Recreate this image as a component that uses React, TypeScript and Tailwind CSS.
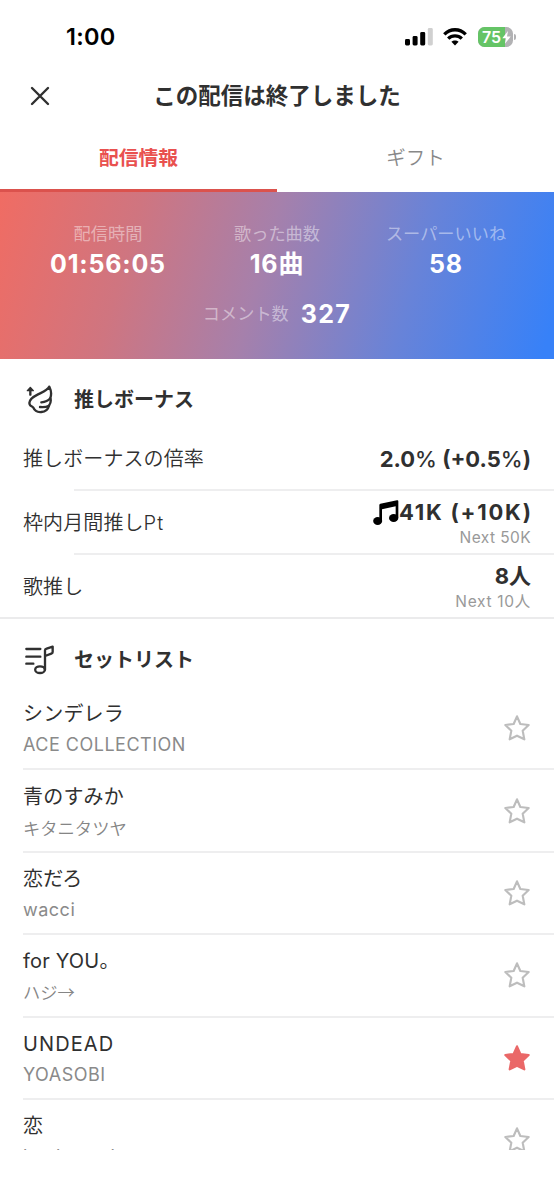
import React from 'react';

interface Song {
  title: string;
  artist: string;
  liked?: boolean;
  latin?: boolean;
}

const songs: Song[] = [
  { title: 'シンデレラ', artist: 'ACE COLLECTION', latin: true },
  { title: '青のすみか', artist: 'キタニタツヤ' },
  { title: '恋だろ', artist: 'wacci', latin: true },
  { title: 'for YOU。', artist: 'ハジ→' },
  { title: 'UNDEAD', artist: 'YOASOBI', liked: true, latin: true },
  { title: '恋', artist: 'back number', latin: true },
];

const StatusBar = () => (
  <div className="flex h-[74px] shrink-0 items-center justify-between pl-[66px] pr-[38px]">
    <span className="text-[23.5px] font-semibold tracking-[0.3px] text-black">1:00</span>
    <div className="flex items-center">
      <svg width="28" height="18" viewBox="0 0 28 18">
        <rect x="0" y="11" width="5" height="6.5" rx="1.4" />
        <rect x="7.6" y="8" width="5" height="9.5" rx="1.4" />
        <rect x="15.2" y="4" width="5" height="13.5" rx="1.4" />
        <rect x="22.8" y="0" width="5" height="17.5" rx="1.4" fill="#d0d0d0" />
      </svg>
      <svg className="ml-[10px]" width="24" height="18" viewBox="0 0 24 18" fill="none" stroke="#000" strokeWidth="3.3">
        <path d="M1.3 6.4C7.4 0.2 16.6 0.2 22.7 6.4" />
        <path d="M5.2 10.7C9 6.9 15 6.9 18.8 10.7" />
        <path d="M8.4 13.8C10.4 12 13.6 12 15.6 13.8L12 17.4Z" fill="#000" stroke="none" />
      </svg>
      <div className="relative ml-[11px] h-5 w-[35px] overflow-hidden rounded-[6.5px] bg-[#b2b2b4]">
        <div className="flex h-full w-[27px] items-center bg-[#65c466] pl-[4px] text-[16px] font-semibold text-white">75</div>
        <svg className="absolute left-[24px] top-[4px]" width="9" height="13" viewBox="0 0 9 13">
          <path d="M6 0L0.3 7.2H4L2.9 12.8L8.7 5.5H5Z" fill="#fff" />
        </svg>
      </div>
      <div className="ml-px h-[6px] w-[2px] rounded-r-full bg-[#b2b2b4]" />
    </div>
  </div>
);

const WingIcon = () => (
  <svg width="28" height="30" viewBox="78 44 84 90" fill="none" stroke="#303030" strokeWidth="7" strokeLinecap="round" strokeLinejoin="round">
    <path d="M94 73V60" />
    <path d="M94 51L85 61H103Z" fill="#303030" strokeWidth="4" />
    <path d="M151 49C144 61 131 65 117 72C101 80 88 91 92 102C94 108 100 107 103 112C107 122 116 126 127 125C139 124 147 118 150 106C155 99 157 92 154 83C158 72 156 59 151 49Z" />
    <path d="M154 84C147 92 138 95 127 96M150 106C143 110 133 111 123 110" />
  </svg>
);

const SetlistIcon = () => (
  <svg width="30" height="30" viewBox="76 45 90 90" fill="none" stroke="#303030" strokeWidth="7" strokeLinecap="round" strokeLinejoin="round">
    <path d="M80 57H122M80 80H122M80 101H101" />
    <ellipse cx="121" cy="119" rx="14.5" ry="10" />
    <path d="M136 119V61C136 58 138 57 141 56L159 50V66C159 69 158 70 155 71L136 78" />
  </svg>
);

const NoteIcon = () => (
  <svg width="26" height="26" viewBox="96 213 78 78">
    <path d="M115 228Q115 225 118 224L168 214Q172 213 172 217V266H164V232L123 241V276H115Z" />
    <ellipse cx="110" cy="276" rx="13.5" ry="12" />
    <ellipse cx="158" cy="267" rx="14" ry="12" />
  </svg>
);

const Star = ({ filled }: { filled?: boolean }) => (
  <svg
    width="28"
    height="28"
    viewBox="69 44 84 84"
    fill={filled ? '#ea6868' : 'none'}
    stroke={filled ? '#ea6868' : '#bdbdbd'}
    strokeWidth="6.5"
    strokeLinejoin="round"
  >
    <path d="M111 51L121 74L146 77L128 94L133 120L111 109L89 120L94 94L76 77L101 74Z" />
  </svg>
);

const Stat = ({ label, value }: { label: string; value: React.ReactNode }) => (
  <div className="flex w-[169px] flex-col items-center">
    <span className="text-[17.2px] leading-[26px] text-white/45 whitespace-nowrap">{label}</span>
    <span className="mt-px text-[25px] font-bold leading-[32px] tracking-[0.8px] text-white">{value}</span>
  </div>
);

const BonusRow = ({ label, value, next }: { label: React.ReactNode; value: React.ReactNode; next?: React.ReactNode }) => (
  <div className="flex h-16 items-center justify-between pl-[23px] pr-[23px]">
    <span className="text-[20px] font-[350] tracking-[0.1px]">{label}</span>
    <div className={`flex flex-col items-end ${next ? 'pt-[3px]' : ''}`}>
      <div className="flex h-[27px] items-center text-[22px] font-bold leading-[27px]">{value}</div>
      {next && <div className="text-[15.5px] leading-[24px] tracking-[0.4px] text-[#999]">{next}</div>}
    </div>
  </div>
);

const SongRow = ({ song }: { song: Song }) => (
  <div className="ml-[23px] flex h-[82.4px] shrink-0 items-center justify-between border-b-2 border-[#eeeeef] pr-[23px]">
    <div className="flex flex-col pt-[3px]">
      <span className={`text-[20px] leading-[30px] ${song.title === 'UNDEAD' ? 'tracking-[1.1px]' : 'tracking-[0.2px]'}`}>{song.title}</span>
      <span
        className={
          song.latin
            ? 'pt-px text-[18px] leading-[30px] tracking-[0.5px] text-[#8a8a8a]'
            : "font-['Noto_Sans_CJK_JP',sans-serif] text-[17.3px] font-[350] leading-[31px] text-[#858585]"
        }
      >
        {song.artist}
      </span>
    </div>
    <Star filled={song.liked} />
  </div>
);

const App: React.FC = () => {
  return (
    <div className="flex h-[1199px] w-[554px] flex-col overflow-hidden bg-white font-['Inter','Noto_Sans_CJK_JP',sans-serif] text-[#303030]">
      <StatusBar />

      <header className="grid h-[44px] shrink-0 grid-cols-[80px_1fr_80px] items-center">
        <svg className="ml-[30px]" width="20" height="20" viewBox="0 0 20 20" stroke="#303030" strokeWidth="2.4" strokeLinecap="round">
          <path d="M2 2L18 18M18 2L2 18" />
        </svg>
        <h1 className="text-center text-[22.5px] font-bold whitespace-nowrap">この配信は終了しました</h1>
      </header>

      <div className="grid h-[74px] shrink-0 grid-cols-2">
        <div className="flex items-center justify-center border-b-[3px] border-[#db524d] pt-[10px] text-[19.8px] font-bold text-[#e9514f]">配信情報</div>
        <div className="flex items-center justify-center pt-[7px] text-[19.5px] font-[350] text-[#888]">ギフト</div>
      </div>

      <main className="flex h-[958px] shrink-0 flex-col overflow-hidden">
        <section className="h-[167px] shrink-0 bg-[linear-gradient(106deg,#f06c63_0%,#cf7580_24%,#a680ab_47%,#6883d8_73%,#3781f8_98%)] pt-[29px]">
          <div className="flex justify-center">
            <Stat label="配信時間" value="01:56:05" />
            <Stat label="歌った曲数" value="16曲" />
            <Stat label="スーパーいいね" value="58" />
          </div>
          <div className="mt-[18px] flex items-center justify-center gap-[12px]">
            <span className="text-[17.2px] text-white/45">コメント数</span>
            <span className="text-[25px] font-bold leading-[32px] tracking-[1.3px] text-white">327</span>
          </div>
        </section>

        <section className="shrink-0">
          <div className="flex h-[68px] items-center pl-[25px] pt-[13px]">
            <WingIcon />
            <h2 className="ml-[21px] text-[20px] font-bold">推しボーナス</h2>
          </div>
          <BonusRow label="推しボーナスの倍率" value={<span>2.0<span className="font-medium">%</span> (+0.5<span className="font-medium">%</span>)</span>} />
          <div className="-mt-[2px] ml-[74px] border-t-2 border-[#eeeeef]" />
          <BonusRow
            label={<>枠内月間推し<span className="font-light tracking-[1px]">Pt</span></>}
            value={<><NoteIcon /><span className="-mr-[1.7px] tracking-[1.75px]">41K (+10K)</span></>}
            next="Next 50K"
          />
          <div className="-mt-[2px] ml-[74px] border-t-2 border-[#eeeeef]" />
          <BonusRow label="歌推し" value="8人" next={<span className="tracking-[0.7px]">Next 10人</span>} />
          <div className="-mt-[2px] border-t-2 border-[#ebebec]" />
        </section>

        <section className="flex flex-col">
          <div className="flex h-[69px] shrink-0 items-center pl-[25px] pt-[13px]">
            <SetlistIcon />
            <h2 className="ml-[19px] text-[20px] font-bold">セットリスト</h2>
          </div>
          {songs.map((song) => (
            <SongRow key={song.title} song={song} />
          ))}
        </section>
      </main>
    </div>
  );
};

export default App;
